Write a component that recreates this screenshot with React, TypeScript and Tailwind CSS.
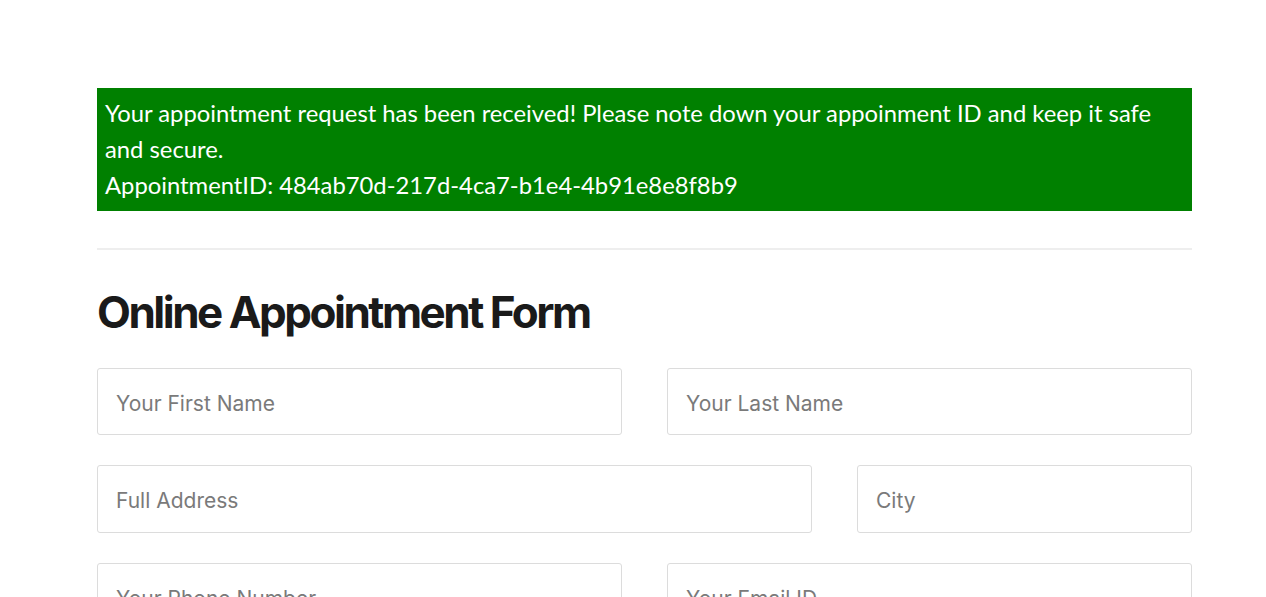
export default function App() {
  return (
    <div className="min-h-screen bg-white">
      <div className="ml-[97px] w-[1095px] pt-[88px]">
        <div
          className="bg-[#008000] px-2 pt-[7px] pb-[8px] text-[23.8px] leading-[36px] text-white"
          style={{ fontFamily: 'Lato, "Open Sans", sans-serif' }}
        >
          <p>
            Your appointment request has been received! Please note down your appoinment ID and keep it safe and secure.
          </p>
          <p>AppointmentID: 484ab70d-217d-4ca7-b1e4-4b91e8e8f8b9</p>
        </div>

        <hr className="mt-[37px] border-t-2 border-[#eeeeee]" />

        <form style={{ fontFamily: 'Inter, "Noto Sans", sans-serif' }}>
          <h2 className="mt-[36px] text-[44px] font-bold leading-[1.2] tracking-[-2.5px] text-[#1a1a1a]">
            Online Appointment Form
          </h2>

          <div className="mt-[29px] flex flex-col gap-[30px]">
            <div className="grid grid-cols-2 gap-x-[45px]">
              <Field placeholder="Your First Name" />
              <Field placeholder="Your Last Name" />
            </div>
            <div className="grid grid-cols-[715px_335px] gap-x-[45px]">
              <Field placeholder="Full Address" />
              <Field placeholder="City" />
            </div>
            <div className="grid grid-cols-2 gap-x-[45px]">
              <Field placeholder="Your Phone Number" />
              <Field placeholder="Your Email ID" />
            </div>
          </div>
        </form>
      </div>
    </div>
  );
}

function Field({ placeholder }: { placeholder: string }) {
  return (
    <input
      type="text"
      placeholder={placeholder}
      className="h-[67.5px] w-full rounded-[3px] border border-[#dcdcdc] bg-white px-[18px] pt-[3px] text-[21px] text-[#333] placeholder:text-[#7a7a7a] outline-none"
    />
  );
}
